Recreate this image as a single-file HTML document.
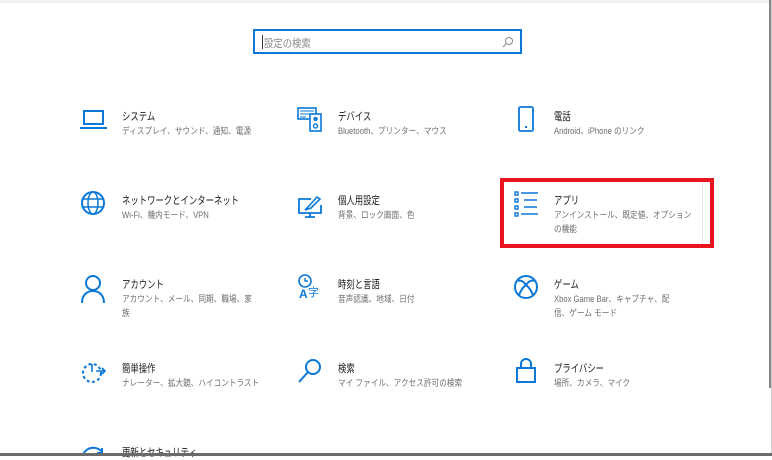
<!DOCTYPE html>
<html><head><meta charset="utf-8"><style>
*{margin:0;padding:0;box-sizing:border-box}
body{width:772px;height:456px;background:#fff;position:relative;overflow:hidden;font-family:"Liberation Sans","Noto Sans CJK JP",sans-serif}
.top{position:absolute;left:0;top:0;width:772px;height:3px;background:#f0f0f0}
.bot{position:absolute;left:0;top:453px;width:772px;height:3px;background:#6b6b6b}
.sb{position:absolute;left:769px;top:0;width:2px;height:388px;background:#888}
.sb2{position:absolute;left:771px;top:0;width:1px;height:456px;background:#ccc}
.search{position:absolute;left:253px;top:29px;width:269px;height:25px;border:2px solid #0a78d7}
.search span{position:absolute;left:9px;top:4px;font-size:11px;color:#8a8a8a;transform:scaleX(.85);transform-origin:left}
.search i{position:absolute;left:7px;top:4px;width:1px;height:14px;background:#333}
.search svg{position:absolute;right:6px;top:5px}
.t{position:absolute;font-size:11px;color:#1a1a1a;white-space:nowrap;transform:scaleX(.76);transform-origin:left}
.d{position:absolute;font-size:9px;color:#6d6d6d;line-height:14px;white-space:nowrap;transform:scaleX(.85);transform-origin:left}
.red{position:absolute;left:500px;top:178px;width:214px;height:70px;border:4px solid #e8141e}
.gl{position:absolute;left:702px;top:182px;width:1px;height:62px;background:#e4e4e4}
</style></head><body>
<div class="top"></div><div class="sb2"></div><div class="sb"></div>
<div class="search"><i></i><span>設定の検索</span>
<svg width="12" height="12" viewBox="0 0 12 12" fill="none" stroke="#888" stroke-width="1"><circle cx="7" cy="5" r="3.5"/><path d="M4.5 7.5 1 11"/></svg></div>

<svg width="772" height="456" style="position:absolute;left:0;top:0" fill="none" stroke="#0a78d7" stroke-width="2">
<rect x="84" y="111" width="19" height="13"/><path d="M80 128h27"/>
<rect x="298" y="108" width="18" height="11" stroke-width="1.6"/><path d="M300 111h14M300 114h14M300 117h6" stroke-width="1"/>
<rect x="310" y="114" width="11" height="17" fill="#fff" stroke-width="1.6"/><circle cx="315.5" cy="119" r="1.2"/><circle cx="315.5" cy="126" r="2" stroke-width="1.4"/>
<rect x="519" y="107" width="14" height="24" rx="1.5" stroke-width="1.8"/><path d="M525 127h2"/>
<circle cx="93" cy="203" r="11"/><ellipse cx="93" cy="203" rx="5" ry="11" stroke-width="1.5"/><path d="M82 199h22M82 207h22" stroke-width="1.5"/>
<path d="M311 199h-12v14h22v-8" stroke-width="1.8"/><path d="M305 217h10M310 213v4" stroke-width="1.8"/><path d="M305 210l4-4 8-9 3 2-9 9z" stroke-width="1.6"/>
<g stroke-width="1.4"><rect x="515" y="192" width="3" height="3"/><rect x="515" y="199" width="3" height="3"/><rect x="515" y="206" width="3" height="3"/><rect x="515" y="213" width="3" height="3"/></g>
<path d="M521 193h17M524 200h13M524 207h13M521 214h17" stroke-width="1.4"/>
<circle cx="93" cy="283" r="7"/><path d="M82 303c0-8 5-12 11-12s11 4 11 12"/>
<circle cx="305" cy="281" r="6" stroke-width="1.6"/><path d="M305 278v3h3" stroke-width="1.4"/>
<text x="299" y="298" font-size="12" fill="#0a78d7" stroke="none" font-weight="bold" font-family="Liberation Sans">A</text>
<text x="308" y="296" font-size="11" fill="#0a78d7" stroke="none" font-family="Noto Sans CJK JP">字</text>
<circle cx="526" cy="287" r="11"/>
<path d="M519 295c2-5 4-8 7-10 3 2 5 5 7 10M518 281c3-1 5 0 8 4 3-4 5-5 8-4" stroke-width="2"/>
<circle cx="92" cy="373" r="9" stroke-dasharray="3 2.5"/><path d="M92 364v8M96 371h9M102 368l3 3-3 3" stroke-width="1.6"/>
<circle cx="313" cy="367" r="7"/><path d="M308 372l-9 10"/>
<path d="M521 368v-4a5 5 0 0 1 10 0v4"/><rect x="517" y="368" width="18" height="14"/>
<path d="M83 455a11 11 0 0 1 19-3M102 448v5h-5" stroke-width="2"/>
</svg>

<div class="t" style="left:122px;top:108px">システム</div>
<div class="d" style="left:122px;top:124px">ディスプレイ、サウンド、通知、電源</div>
<div class="t" style="left:338px;top:108px">デバイス</div>
<div class="d" style="left:338px;top:124px">Bluetooth、プリンター、マウス</div>
<div class="t" style="left:554px;top:108px">電話</div>
<div class="d" style="left:554px;top:124px">Android、iPhone のリンク</div>

<div class="t" style="left:122px;top:192px">ネットワークとインターネット</div>
<div class="d" style="left:122px;top:208px">Wi-Fi、機内モード、VPN</div>
<div class="t" style="left:338px;top:192px">個人用設定</div>
<div class="d" style="left:338px;top:208px">背景、ロック画面、色</div>
<div class="t" style="left:554px;top:192px">アプリ</div>
<div class="d" style="left:554px;top:208px">アンインストール、既定値、オプション<br>の機能</div>

<div class="t" style="left:122px;top:276px">アカウント</div>
<div class="d" style="left:122px;top:292px">アカウント、メール、同期、職場、家<br>族</div>
<div class="t" style="left:338px;top:276px">時刻と言語</div>
<div class="d" style="left:338px;top:292px">音声認識、地域、日付</div>
<div class="t" style="left:554px;top:276px">ゲーム</div>
<div class="d" style="left:554px;top:292px">Xbox Game Bar、キャプチャ、配<br>信、ゲーム モード</div>

<div class="t" style="left:122px;top:360px">簡単操作</div>
<div class="d" style="left:122px;top:376px">ナレーター、拡大鏡、ハイコントラスト</div>
<div class="t" style="left:338px;top:360px">検索</div>
<div class="d" style="left:338px;top:376px">マイ ファイル、アクセス許可の検索</div>
<div class="t" style="left:554px;top:360px">プライバシー</div>
<div class="d" style="left:554px;top:376px">場所、カメラ、マイク</div>

<div class="t" style="left:122px;top:444px">更新とセキュリティ</div>

<div class="gl"></div>
<div class="red"></div>
<div class="bot"></div>
</body></html>
